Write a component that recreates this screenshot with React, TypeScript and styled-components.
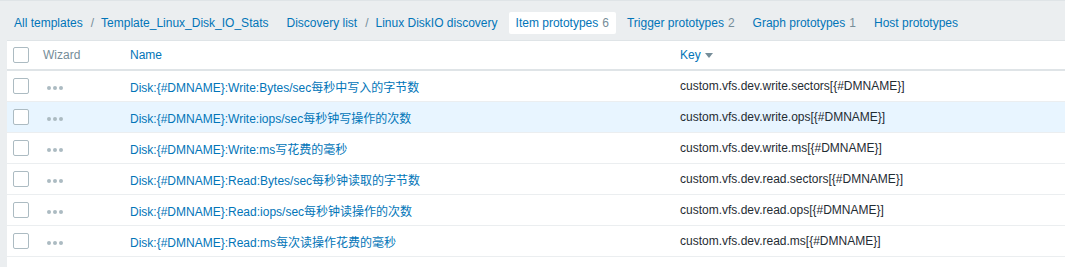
import React from 'react';
import styled, { createGlobalStyle } from 'styled-components';

const Global = createGlobalStyle`
  body {
    margin: 0;
    background: #ebeef0;
    font-family: "Liberation Sans", Arial, "Noto Sans CJK SC", sans-serif;
    font-size: 12px;
    color: #1f2c33;
  }
`;

const Page = styled.div`
  height: 267px;
  border-top: 1px solid #dfe4e7;
  box-sizing: border-box;
  overflow: hidden;
`;

const Nav = styled.ul`
  display: flex;
  align-items: center;
  gap: 4px;
  list-style: none;
  margin: 0;
  padding: 4px 0 0 7px;
  height: 39px;
  box-sizing: border-box;
`;

const Crumbs = styled.li`
  display: flex;
  align-items: center;
`;

const Tab = styled.span<{ $active?: boolean }>`
  display: flex;
  align-items: center;
  height: 22px;
  padding: 0 7px;
  background: ${p => (p.$active ? '#fff' : 'transparent')};
  border-radius: 2px;
  color: #0275b8;
  white-space: nowrap;
`;

const Sep = styled.span`
  color: #768d99;
  margin-left: 1px;
`;

const Count = styled.span`
  color: #768d99;
  margin-left: 4px;
`;

const Table = styled.div`
  margin-left: 7px;
  background: #fff;
  border-top: 1px solid #dfe4e7;
  padding-bottom: 20px;
`;

const Row = styled.div<{ $head?: boolean; $hover?: boolean }>`
  display: grid;
  grid-template-columns: 29px 87px 550px 1fr;
  align-items: center;
  height: ${p => (p.$head ? '28px' : '30px')};
  border-bottom: ${p => (p.$head ? '2px solid #dfe4e7' : '1px solid #ebeef0')};
  background: ${p => (p.$hover ? '#e8f5ff' : 'transparent')};
`;

const Cell = styled.div<{ $muted?: boolean; $link?: boolean }>`
  padding-left: 7px;
  color: ${p => (p.$muted ? '#768d99' : p.$link ? '#0275b8' : '#1f2c33')};
  white-space: nowrap;
`;

const CheckCell = styled.div`
  padding-left: 6px;
  display: flex;
  align-items: center;
`;

const Check = styled.span`
  width: 14px;
  height: 14px;
  border: 1px solid #acbbc2;
  border-radius: 2px;
  background: #fff;
`;

const Dots = styled.span`
  display: inline-flex;
  gap: 2px;
  margin-left: 4px;
  span {
    width: 4px;
    height: 4px;
    border-radius: 50%;
    background: #acbbc2;
  }
`;

const Arrow = styled.span`
  display: inline-block;
  margin-left: 4px;
  width: 0;
  height: 0;
  border-left: 4px solid transparent;
  border-right: 4px solid transparent;
  border-top: 5px solid #768d99;
  vertical-align: 1px;
`;

const items = [
  ['Disk:{#DMNAME}:Write:Bytes/sec每秒中写入的字节数', 'custom.vfs.dev.write.sectors[{#DMNAME}]'],
  ['Disk:{#DMNAME}:Write:iops/sec每秒钟写操作的次数', 'custom.vfs.dev.write.ops[{#DMNAME}]'],
  ['Disk:{#DMNAME}:Write:ms写花费的毫秒', 'custom.vfs.dev.write.ms[{#DMNAME}]'],
  ['Disk:{#DMNAME}:Read:Bytes/sec每秒钟读取的字节数', 'custom.vfs.dev.read.sectors[{#DMNAME}]'],
  ['Disk:{#DMNAME}:Read:iops/sec每秒钟读操作的次数', 'custom.vfs.dev.read.ops[{#DMNAME}]'],
  ['Disk:{#DMNAME}:Read:ms每次读操作花费的毫秒', 'custom.vfs.dev.read.ms[{#DMNAME}]'],
];

export default function App() {
  return (
    <Page>
      <Global />
      <Nav>
        <Crumbs>
          <Tab>All templates</Tab>
          <Sep>/</Sep>
          <Tab>Template_Linux_Disk_IO_Stats</Tab>
        </Crumbs>
        <Crumbs>
          <Tab>Discovery list</Tab>
          <Sep>/</Sep>
          <Tab>Linux DiskIO discovery</Tab>
        </Crumbs>
        <Crumbs><Tab $active>Item prototypes<Count>6</Count></Tab></Crumbs>
        <Crumbs><Tab>Trigger prototypes<Count>2</Count></Tab></Crumbs>
        <Crumbs><Tab>Graph prototypes<Count>1</Count></Tab></Crumbs>
        <Crumbs><Tab>Host prototypes</Tab></Crumbs>
      </Nav>
      <Table>
        <Row $head>
          <CheckCell><Check /></CheckCell>
          <Cell $muted>Wizard</Cell>
          <Cell $link>Name</Cell>
          <Cell $link>Key<Arrow /></Cell>
        </Row>
        {items.map(([name, key], i) => (
          <Row key={key} $hover={i === 1}>
            <CheckCell><Check /></CheckCell>
            <Cell><Dots><span /><span /><span /></Dots></Cell>
            <Cell $link>{name}</Cell>
            <Cell>{key}</Cell>
          </Row>
        ))}
      </Table>
    </Page>
  );
}
